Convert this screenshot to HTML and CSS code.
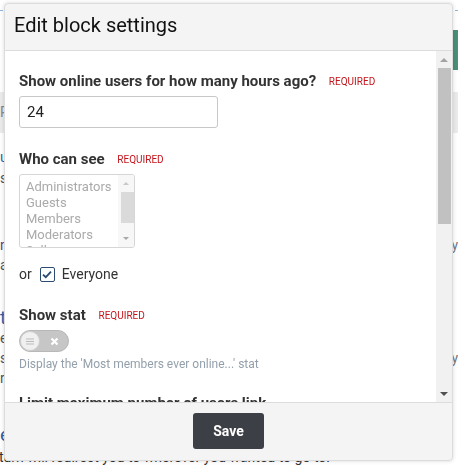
FILE: index.html
```html
<!DOCTYPE html>
<html lang="en">
<head>
    <meta charset="UTF-8">
    <meta name="viewport" content="width=device-width, initial-scale=1.0">
    <title>Edit block settings</title>
    <link rel="stylesheet" href="styles.css">
</head>
<body>
    <div class="page">
        <div class="topbar"></div>
        <div class="toolbar"><span class="green-btn"></span></div>
        <div class="gray-band">R</div>
        <div class="page-text">
            <p class="blue r1">u</p>
            <p class="r2">s</p>
            <p class="purple r3">n <span class="right-y">y</span></p>
            <p class="r4">a</p>
            <p class="blue big r5">t</p>
            <p class="r6">e</p>
            <p class="r6">s <span class="right-y">y</span></p>
            <p class="r6">r</p>
            <p class="blue big r7">e</p>
            <p class="last">turn will redirect you to wherever you wanted to go to.</p>
        </div>
    </div>

    <div class="modal">
        <div class="modal-header">Edit block settings</div>
        <div class="modal-body">
            <div class="body-content">
                <div class="field">
                    <label class="field-label">Show online users for how many hours ago? <span class="required">REQUIRED</span></label>
                    <input type="text" class="text-input" value="24">
                </div>
                <div class="field">
                    <label class="field-label">Who can see <span class="required">REQUIRED</span></label>
                    <div class="groups">
                        <ul class="group-list">
                            <li>Administrators</li>
                            <li>Guests</li>
                            <li>Members</li>
                            <li>Moderators</li>
                            <li>Sellers</li>
                        </ul>
                        <div class="mini-scrollbar">
                            <span class="mini-btn"><span class="arrow-up light"></span></span>
                            <span class="mini-track"><span class="mini-thumb"></span></span>
                            <span class="mini-btn"><span class="arrow-down light"></span></span>
                        </div>
                    </div>
                    <div class="or-row">
                        <span>or</span>
                        <span class="checkbox">
                            <svg width="10" height="9" viewBox="0 0 10 9"><path d="M1 4.6 L3.8 7.2 L9 1.6" fill="none" stroke="#2c4b70" stroke-width="1.8"/></svg>
                        </span>
                        <span>Everyone</span>
                    </div>
                </div>
                <div class="field">
                    <label class="field-label">Show stat <span class="required">REQUIRED</span></label>
                    <div class="toggle">
                        <span class="knob">
                            <svg width="8" height="7" viewBox="0 0 8 7"><path d="M0 1h8M0 3.5h8M0 6h8" stroke="#bbb" stroke-width="1"/></svg>
                        </span>
                        <svg class="cross" width="9" height="9" viewBox="0 0 9 9"><path d="M1.5 1.5 L7.5 7.5 M7.5 1.5 L1.5 7.5" stroke="#fff" stroke-width="2.2"/></svg>
                    </div>
                    <div class="help">Display the 'Most members ever online...' stat</div>
                </div>
                <div class="field">
                    <label class="field-label">Limit maximum number of users link</label>
                    <input type="text" class="text-input" value="0">
                </div>
            </div>
            <div class="scrollbar">
                <span class="sb-btn"><span class="arrow-up"></span></span>
                <span class="sb-track"><span class="sb-thumb"></span></span>
                <span class="sb-btn"><span class="arrow-down"></span></span>
            </div>
        </div>
        <div class="modal-footer">
            <button class="save-btn">Save</button>
        </div>
    </div>
</body>
</html>
```

FILE: styles.css
```css
body {
    margin: 0;
    font-family: Roboto, "Liberation Sans", Arial, sans-serif;
    background-color: #fff;
    color: #333;
    overflow: hidden;
}
.page {
    height: 465px;
}
.topbar {
    height: 10px;
    border-bottom: 1px dashed #8db6e0;
}
.toolbar {
    height: 81px;
    position: relative;
}
.green-btn {
    position: absolute;
    right: -10px;
    top: 19px;
    width: 30px;
    height: 40px;
    background-color: #4a8f78;
}
.gray-band {
    height: 41px;
    background-color: #ebebeb;
    font-size: 14px;
    line-height: 41px;
    color: #888;
}
.page-text {
    font-size: 14px;
    color: #555;
}
.page-text p {
    margin: 0;
    height: 20px;
    line-height: 20px;
    position: relative;
}
.page-text .blue {
    color: #2f5fa5;
}
.page-text .purple {
    color: #6c3d74;
}
.page-text .big {
    font-size: 19px;
}
.page-text .r1 { margin-top: 14px; }
.page-text .r2 { margin-top: 1px; }
.page-text .r3 { margin-top: 47px; }
.page-text .r4 { margin-top: 0; }
.page-text .r5 { margin-top: 33px; }
.page-text .r6 { margin-top: 0; }
.page-text .r7 { margin-top: 37px; }
.page-text .last {
    margin-top: 2px;
    margin-left: -1px;
    color: #333;
}
.right-y {
    position: absolute;
    right: 0;
    color: #777;
}

/* modal */
.modal {
    position: fixed;
    left: 4px;
    top: 3px;
    width: 447px;
    height: 456px;
    border: 1px solid #dcdcdc;
    border-radius: 4px;
    box-shadow: 0 0 4px rgba(0, 0, 0, 0.15);
    display: flex;
    flex-direction: column;
    overflow: hidden;
    background-color: #f4f4f4;
}
.modal-header {
    height: 46px;
    flex-shrink: 0;
    padding-left: 9px;
    font-size: 20px;
    line-height: 42px;
    color: #111;
    border-bottom: 1px solid #dcdcdc;
}
.modal-body {
    flex: 1;
    display: flex;
    min-height: 0;
    background-color: #fff;
}
.body-content {
    flex: 1;
    overflow: hidden;
    padding: 19px 14px 0;
}

/* fake scrollbars */
.scrollbar {
    width: 16px;
    background-color: #f1f1f1;
    display: flex;
    flex-direction: column;
}
.sb-btn {
    height: 17px;
    display: flex;
    align-items: center;
    justify-content: center;
    flex-shrink: 0;
}
.sb-track {
    flex: 1;
    padding: 0 1px 0 2px;
}
.sb-thumb {
    display: block;
    height: 156px;
    background-color: #c1c1c1;
}
.arrow-up {
    width: 0;
    height: 0;
    border-left: 4px solid transparent;
    border-right: 4px solid transparent;
    border-bottom: 4px solid #a3a3a3;
}
.arrow-down {
    width: 0;
    height: 0;
    border-left: 4px solid transparent;
    border-right: 4px solid transparent;
    border-top: 4px solid #505050;
}
.arrow-up.light {
    border-left-width: 3px;
    border-right-width: 3px;
    border-bottom: 3px solid #c8c8c8;
}
.arrow-down.light {
    border-left-width: 3px;
    border-right-width: 3px;
    border-top: 3px solid #a8a8a8;
}

.field {
    margin-bottom: 20px;
}
.field-label {
    display: block;
    height: 20px;
    font-size: 15px;
    font-weight: bold;
    line-height: 22px;
    margin-bottom: 6px;
    color: #333;
}
.required {
    font-size: 10px;
    font-weight: normal;
    color: #c3161c;
    margin-left: 9px;
    vertical-align: 1px;
}
.text-input {
    display: block;
    box-sizing: border-box;
    width: 199px;
    height: 32px;
    border: 1px solid #c8c8c8;
    border-radius: 3px;
    padding: 0 7px;
    font-family: Roboto, "Liberation Sans", Arial, sans-serif;
    font-size: 15px;
    color: #222;
}
.groups {
    display: flex;
    width: 116px;
    height: 74px;
    border: 1px solid #d6d6d6;
    border-radius: 3px;
    box-sizing: border-box;
    overflow: hidden;
    background-color: #fff;
}
.group-list {
    flex: 1;
    list-style: none;
    margin: 0;
    padding: 4px 0 0 6px;
    font-size: 13px;
    line-height: 16px;
    color: #aaa;
    overflow: hidden;
}
.mini-scrollbar {
    width: 16px;
    background-color: #f7f7f7;
    display: flex;
    flex-direction: column;
}
.mini-btn {
    height: 17px;
    display: flex;
    align-items: center;
    justify-content: center;
    flex-shrink: 0;
}
.mini-track {
    flex: 1;
    padding: 0 0 0 3px;
}
.mini-thumb {
    display: block;
    height: 31px;
    background-color: #dadada;
}
.or-row {
    display: flex;
    align-items: center;
    gap: 7px;
    margin-top: 16px;
    height: 20px;
    line-height: 22px;
    font-size: 14px;
    color: #333;
}
.checkbox {
    width: 13px;
    height: 13px;
    border: 1px solid #2c4b70;
    border-radius: 2px;
    display: flex;
    align-items: center;
    justify-content: center;
    margin-left: 1px;
}
.toggle {
    position: relative;
    width: 50px;
    height: 22px;
    border-radius: 11px;
    background-color: #c6c6c6;
    border: 1px solid #b8b8b8;
    box-sizing: border-box;
}
.knob {
    position: absolute;
    left: 0;
    top: 0;
    width: 18px;
    height: 18px;
    border-radius: 50%;
    background-color: #f0f0f0;
    border: 1px solid #cfcfcf;
    display: flex;
    align-items: center;
    justify-content: center;
}
.cross {
    position: absolute;
    left: 30px;
    top: 5.5px;
}
.help {
    margin-top: 4px;
    font-size: 12px;
    line-height: 16px;
    color: #93a0ab;
}
.modal-footer {
    height: 58px;
    flex-shrink: 0;
    border-top: 1px solid #dcdcdc;
    display: flex;
    justify-content: center;
    padding-top: 10px;
    box-sizing: border-box;
}
.save-btn {
    height: 36px;
    padding: 0 20px;
    background-color: #3d3f46;
    color: white;
    border: none;
    border-radius: 3px;
    font-family: Roboto, "Liberation Sans", Arial, sans-serif;
    font-size: 14px;
    font-weight: bold;
    cursor: pointer;
}
```
